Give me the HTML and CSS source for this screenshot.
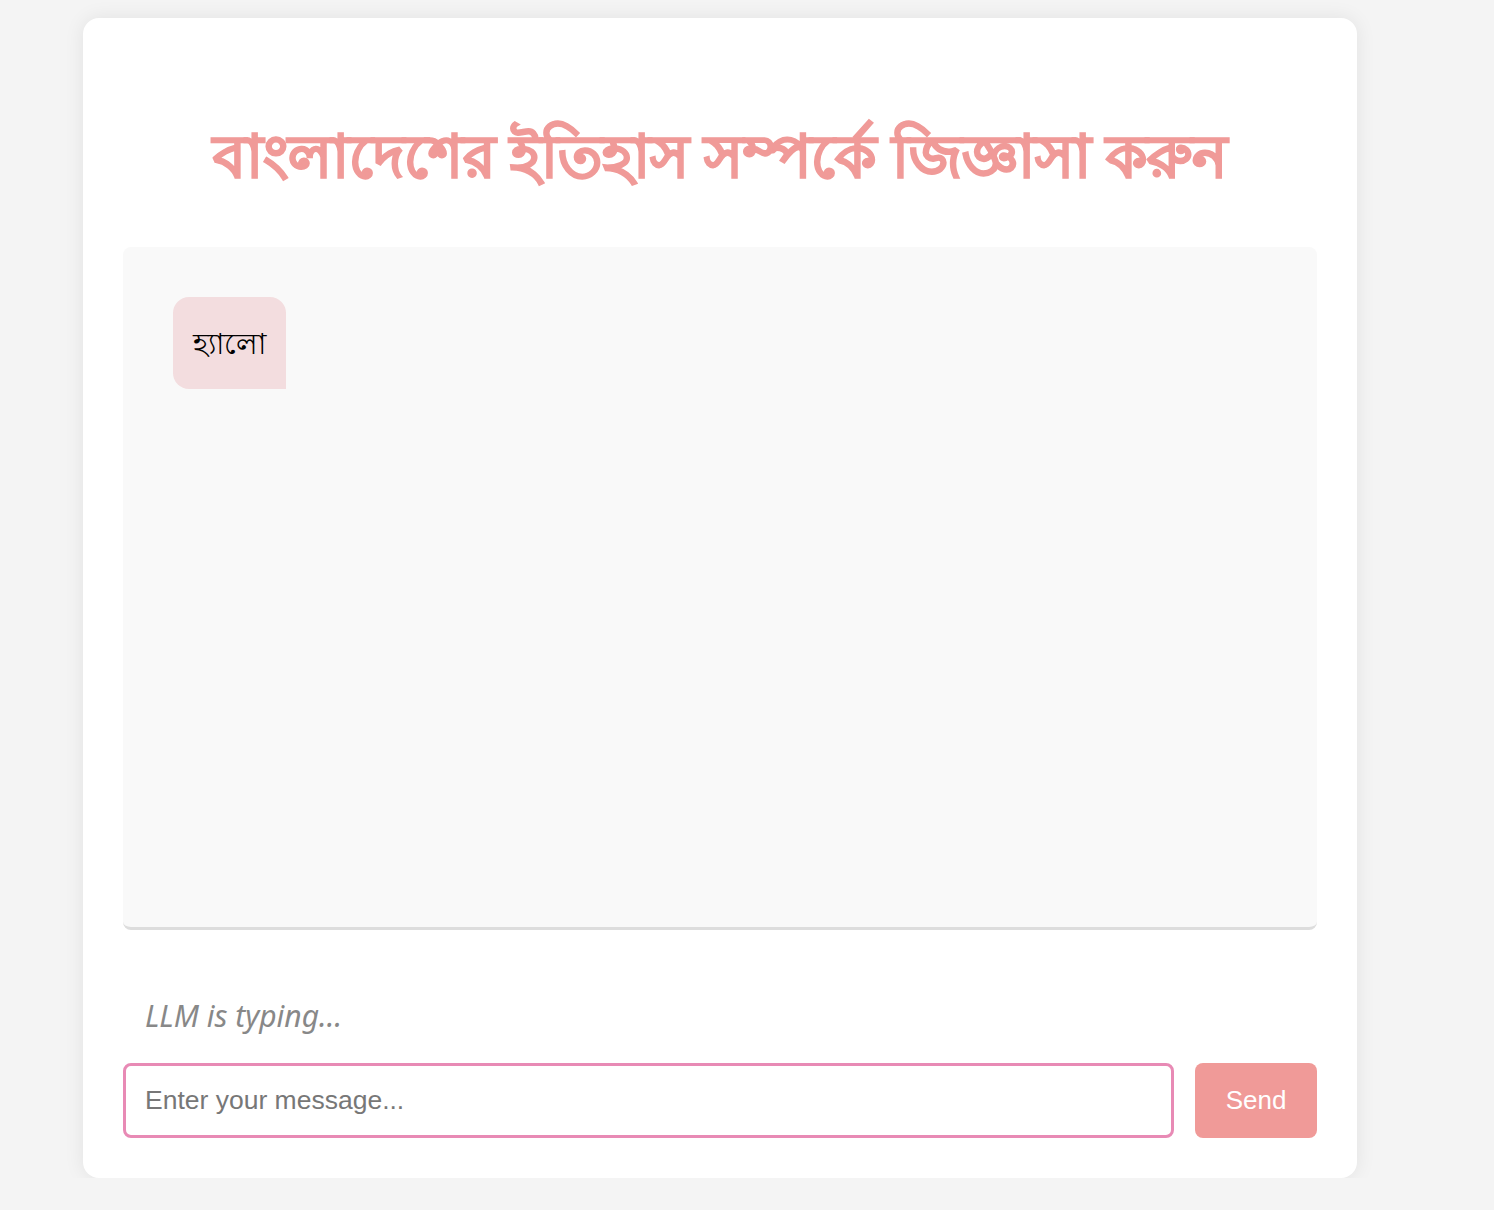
FILE: index.html
```html
<!DOCTYPE html>
<html lang="bn">
<head>
<meta charset="utf-8">
<title>Bangladesh History Chat</title>
<link rel="stylesheet" href="styles.css">
</head>
<body>
<div class="card">
  <h1 class="title">বাংলাদেশের ইতিহাস সম্পর্কে জিজ্ঞাসা করুন</h1>
  <div class="chat">
    <div class="bubble">হ্যালো</div>
  </div>
  <div class="typing">LLM is typing...</div>
  <div class="input-row">
    <input class="msg" type="text" placeholder="Enter your message...">
    <button class="send">Send</button>
  </div>
</div>
</body>
</html>
```
FILE: styles.css
```css
html, body {
  margin: 0;
  padding: 0;
  background: #f4f4f4;
}
body {
  padding: 18px 0 0 83px;
  font-family: "Noto Sans", "Liberation Sans", sans-serif;
}
.card {
  box-sizing: border-box;
  width: 1274px;
  height: 1160px;
  background: #fff;
  border-radius: 16px;
  box-shadow: 0 0 20px rgba(0,0,0,0.08);
  padding: 40px;
  display: flex;
  flex-direction: column;
}
.title {
  margin: 56px 0 0;
  height: 133px;
  text-align: center;
  color: #f09a98;
  font-size: 59px;
  font-weight: 700;
  line-height: 80px;
  -webkit-text-stroke: 1.5px #f09a98;
}
.chat {
  box-sizing: border-box;
  height: 684px;
  background: #f9f9f9;
  border-radius: 8px;
  border-bottom: 3px solid #dddddd;
  padding: 50px;
}
.bubble {
  display: inline-block;
  background: #f3dddf;
  color: #000;
  font-size: 29px;
  line-height: 40px;
  padding: 26px 20px;
  border-radius: 16px 16px 0 16px;
}
.typing {
  margin-top: 66px;
  padding-left: 22px;
  color: #888;
  font-style: italic;
  font-size: 30px;
  line-height: 40px;
  height: 40px;
}
.input-row {
  margin-top: 27px;
  display: flex;
  gap: 21px;
}
.msg {
  flex: 1;
  box-sizing: border-box;
  height: 75px;
  border: 3px solid #e88ab5;
  border-radius: 8px;
  padding: 0 19px;
  font-family: "Liberation Sans", Arial, sans-serif;
  font-size: 26.5px;
  color: #333;
  outline: none;
}
.msg::placeholder {
  color: #777;
}
.send {
  width: 122px;
  height: 75px;
  border: none;
  border-radius: 8px;
  background: #f09a98;
  color: #fff;
  font-family: "Liberation Sans", Arial, sans-serif;
  font-size: 26px;
}
```
